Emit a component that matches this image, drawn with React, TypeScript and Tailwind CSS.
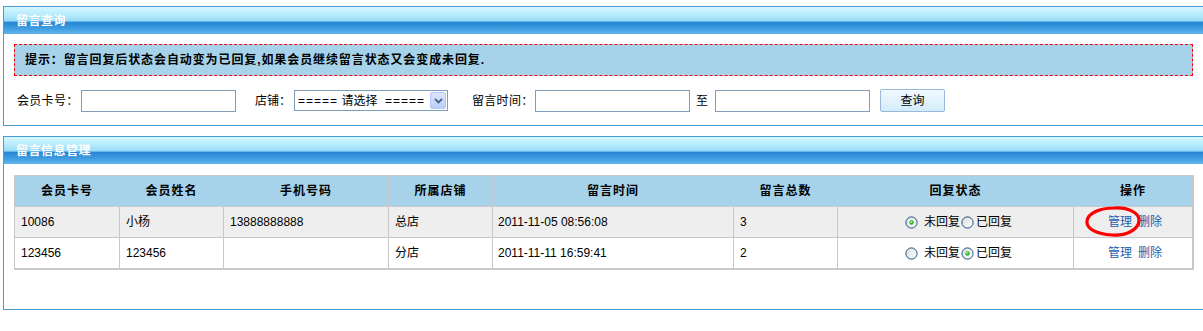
import React from "react";

const headerBar =
  "h-[27px] flex items-center pl-[12px] text-white font-bold tracking-[0.5px] text-[12px] bg-[linear-gradient(to_bottom,#d4f6ff_0%,#b4ebfd_30%,#98daf8_52%,#2585d2_56%,#3d9be0_78%,#62b5ea_100%)]";

const cols = "grid grid-cols-[105px_104px_165px_104px_241px_104px_236px_119px]";

function Radio({ checked }: { checked?: boolean }) {
  return (
    <svg width="13" height="13" viewBox="0 0 13 13" className="inline-block shrink-0">
      <defs>
        <linearGradient id="rg" x1="0" y1="0" x2="1" y2="1">
          <stop offset="0" stopColor="#dcdcd7" />
          <stop offset="1" stopColor="#ffffff" />
        </linearGradient>
      </defs>
      <circle cx="6.5" cy="6.5" r="5.6" fill="url(#rg)" stroke="#1c5180" strokeWidth="1" />
      {checked && <circle cx="6.5" cy="6.5" r="2.2" fill="#2eb82e" />}
      {checked && <circle cx="6" cy="6" r="0.9" fill="#a8eca8" />}
    </svg>
  );
}

function Field({ className }: { className: string }) {
  return <div className={"h-[22px] border border-[#7f9db9] bg-white " + className} />;
}

type Row = {
  card: string;
  name: string;
  phone: string;
  shop: string;
  time: string;
  count: string;
  replied: boolean;
  mark?: boolean;
};

const rows: Row[] = [
  { card: "10086", name: "小杨", phone: "13888888888", shop: "总店", time: "2011-11-05 08:56:08", count: "3", replied: false, mark: true },
  { card: "123456", name: "123456", phone: "", shop: "分店", time: "2011-11-11 16:59:41", count: "2", replied: true },
];

const heads = ["会员卡号", "会员姓名", "手机号码", "所属店铺", "留言时间", "留言总数", "回复状态", "操作"];

export default function App() {
  return (
    <div className="w-[1203px] h-[331px] overflow-hidden bg-white text-[12px] text-black font-['Liberation_Sans','Noto_Sans_CJK_SC',sans-serif]">
      {/* 留言查询 */}
      <div className="mt-[6px] ml-[3px] border-l border-t border-b border-[#4a9ad6]">
        <div className={headerBar}>留言查询</div>

        <div className="mt-[10px] ml-[10px] w-[1179px] h-[32px] border border-dashed border-[#ff0000] bg-[#a6d3ea] flex items-center pl-[10px] font-bold tracking-[0.9px]">
          提示：留言回复后状态会自动变为已回复,如果会员继续留言状态又会变成未回复.
        </div>

        <div className="mt-[13px] mb-[13px] h-[23px] flex items-center">
          <span className="ml-[13px] w-[64px] tracking-[0.3px]">会员卡号：</span>
          <Field className="w-[155px]" />
          <span className="ml-[19px] w-[39px]">店铺：</span>
          <div className="w-[154px] h-[21px] border border-[#7f9db9] bg-white flex items-center justify-between pl-[3px] pr-[1px]">
            <span className="whitespace-pre">
              <span className="tracking-[1px]">=====</span> 请选择 <span className="tracking-[1px]"> =====</span>
            </span>
            <div className="shrink-0 w-[16px] h-[17px] rounded-[2px] border border-[#b3c8f5] bg-[linear-gradient(to_bottom,#dce7fd,#b8cdf8)] flex items-center justify-center">
              <svg width="9" height="6" viewBox="0 0 9 6">
                <path d="M1 1 L4.5 4.5 L8 1" fill="none" stroke="#4d6185" strokeWidth="1.8" />
              </svg>
            </div>
          </div>
          <span className="ml-[24px] w-[63px] tracking-[0.3px]">留言时间：</span>
          <Field className="w-[155px]" />
          <span className="ml-[6px] w-[19px]">至</span>
          <Field className="w-[155px]" />
          <button className="ml-[10px] w-[65px] h-[23px] rounded-[2px] border border-[#98b8dc] bg-[linear-gradient(to_bottom,#f0f9fe,#d3ecfb)] text-[12px] leading-none">
            查询
          </button>
        </div>
      </div>

      {/* 留言信息管理 */}
      <div className="mt-[10px] ml-[3px] border-l border-t border-b border-[#4a9ad6]">
        <div className={headerBar}>留言信息管理</div>

        <div className="mt-[11px] mb-[39px] ml-[10px] w-[1180px] border border-[#c8c8c8]">
          <div className={cols + " bg-[#a6d3ea] font-bold tracking-[1px]"}>
            {heads.map((h) => (
              <div key={h} className="h-[31px] border-r border-b border-[#c8c8c8] flex items-center justify-center">
                {h}
              </div>
            ))}
          </div>
          {rows.map((r, i) => (
            <div key={r.card} className={cols + (i === 0 ? " bg-[#eeeeee]" : " bg-white")}>
              {[r.card, r.name, r.phone, r.shop, r.time, r.count].map((v, j) => (
                <div key={j} className={"h-[31px] border-r border-b border-[#c8c8c8] flex items-center " + (j === 4 ? "pl-[5px]" : "pl-[6px]")}>
                  {v}
                </div>
              ))}
              <div className="h-[31px] border-r border-b border-[#c8c8c8] flex items-center justify-center pl-[6px]">
                <Radio checked={!r.replied} />
                <span className="ml-[6px]">未回复</span>
                <span className="ml-[1px] flex">
                  <Radio checked={r.replied} />
                </span>
                <span className="ml-[2px]">已回复</span>
              </div>
              <div className="relative h-[31px] border-r border-b border-[#c8c8c8] flex items-center justify-center pl-[4px] text-[#1d5faf]">
                <span>管理</span>
                <span className="ml-[6px]">删除</span>
                {r.mark && (
                  <svg width="58" height="33" viewBox="0 0 58 33" className="absolute left-[10px] top-[-2px]">
                    <path
                      d="M30 3 C44 2 56 8 55 16 C54 25 42 31 28 30 C13 29 2 24 3 16 C4 8 16 3 30 3 Z"
                      fill="none"
                      stroke="#ff0000"
                      strokeWidth="3.2"
                    />
                  </svg>
                )}
              </div>
            </div>
          ))}
        </div>
      </div>
    </div>
  );
}
